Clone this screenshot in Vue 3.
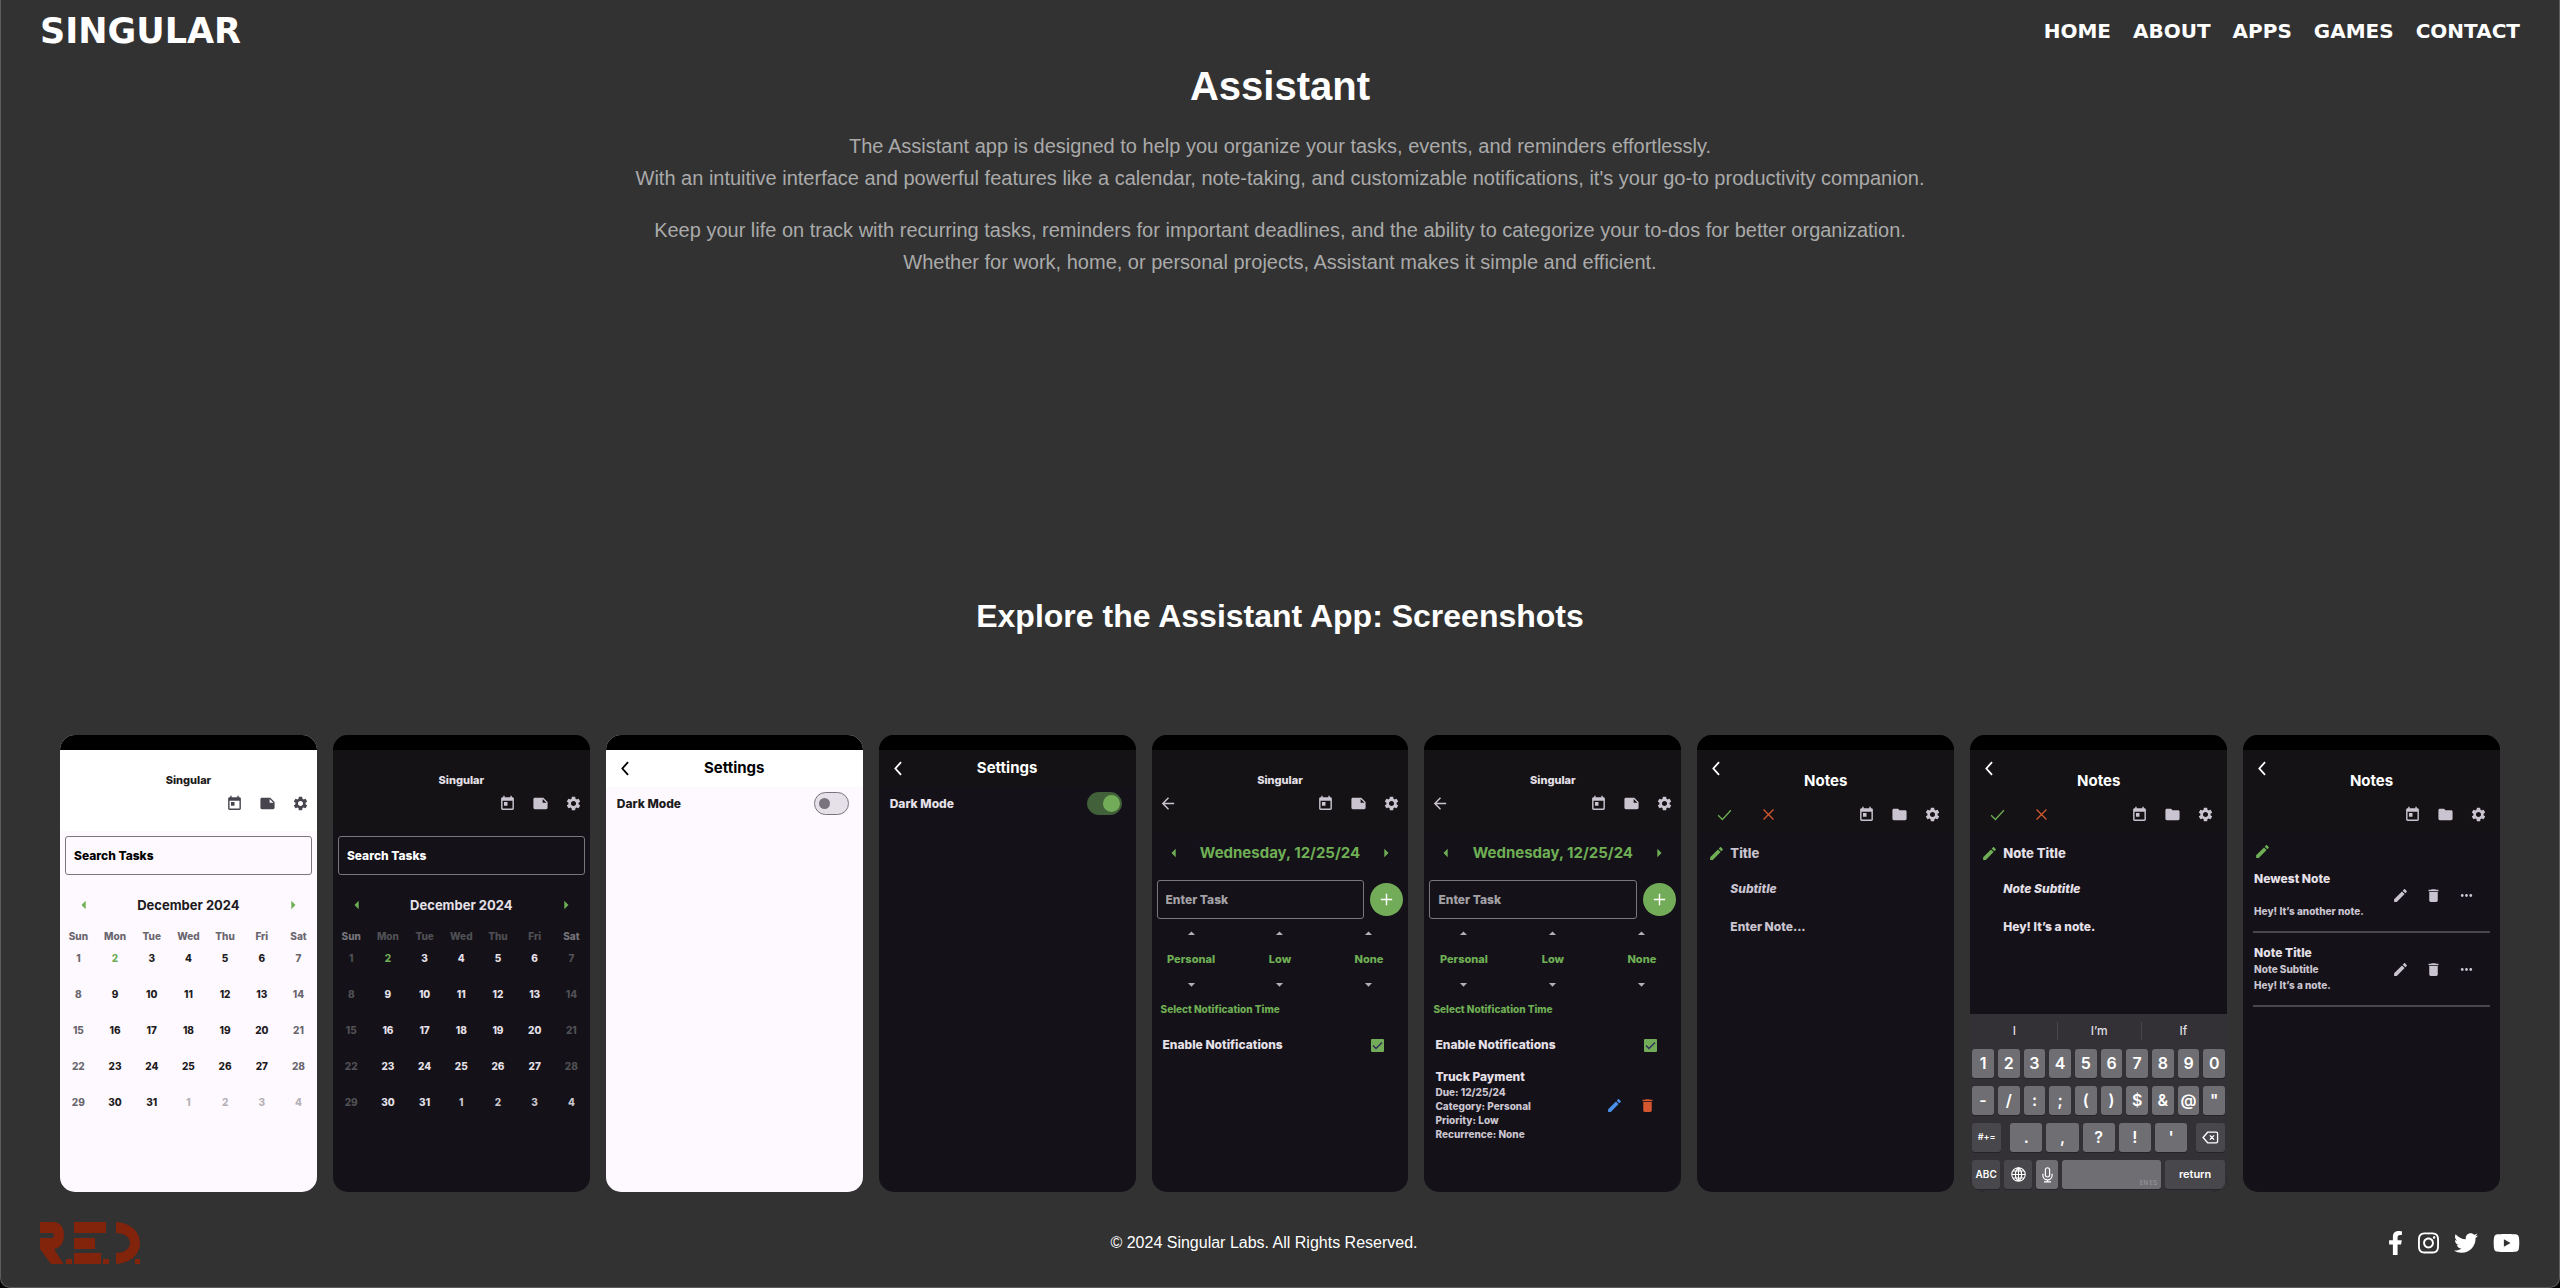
<script setup>
import { h } from 'vue'

const navLinks = ['Home', 'About', 'Apps', 'Games', 'Contact']

const icons = {
  today: { d: 'M19 3h-1V1h-2v2H8V1H6v2H5c-1.11 0-1.99.9-1.99 2L3 19c0 1.1.89 2 2 2h14c1.1 0 2-.9 2-2V5c0-1.1-.9-2-2-2zm0 16H5V8h14v11zM7 10h5v5H7z' },
  note: { d: 'M22 10l-6-6H4c-1.1 0-2 .9-2 2v12.01c0 1.1.9 1.99 2 1.99l16-.01c1.1 0 2-.89 2-1.99v-8zm-7-4.5l5.5 5.5H15V5.5z' },
  folder: { d: 'M10 4H4c-1.1 0-1.99.9-1.99 2L2 18c0 1.1.9 2 2 2h16c1.1 0 2-.9 2-2V8c0-1.1-.9-2-2-2h-8l-2-2z' },
  settings: { d: 'M19.14 12.94c.04-.3.06-.61.06-.94 0-.32-.02-.64-.07-.94l2.03-1.58c.18-.14.23-.41.12-.61l-1.92-3.32c-.12-.22-.37-.29-.59-.22l-2.39.96c-.5-.38-1.03-.7-1.62-.94l-.36-2.54c-.04-.24-.24-.41-.48-.41h-3.84c-.24 0-.43.17-.47.41l-.36 2.54c-.59.24-1.13.57-1.62.94l-2.39-.96c-.22-.08-.47 0-.59.22L2.74 8.87c-.12.21-.08.47.12.61l2.03 1.58c-.05.3-.09.63-.09.94s.02.64.07.94l-2.03 1.58c-.18.14-.23.41-.12.61l1.92 3.32c.12.22.37.29.59.22l2.39-.96c.5.38 1.03.7 1.62.94l.36 2.54c.05.24.24.41.48.41h3.84c.24 0 .44-.17.47-.41l.36-2.54c.59-.24 1.13-.56 1.62-.94l2.39.96c.22.08.47 0 .59-.22l1.92-3.32c.12-.22.07-.47-.12-.61l-2.01-1.58zM12 15.6c-1.98 0-3.6-1.62-3.6-3.6s1.62-3.6 3.6-3.6 3.6 1.62 3.6 3.6-1.62 3.6-3.6 3.6z' },
  edit: { d: 'M3 17.25V21h3.75L17.81 9.94l-3.75-3.75L3 17.25zM20.71 7.04c.39-.39.39-1.02 0-1.41l-2.34-2.34c-.39-.39-1.02-.39-1.41 0l-1.83 1.83 3.75 3.75 1.83-1.83z' },
  trash: { d: 'M6 19c0 1.1.9 2 2 2h8c1.1 0 2-.9 2-2V7H6v12zM19 4h-3.5l-1-1h-5l-1 1H5v2h14V4z' },
  more: { d: 'M6 10c-1.1 0-2 .9-2 2s.9 2 2 2 2-.9 2-2-.9-2-2-2zm12 0c-1.1 0-2 .9-2 2s.9 2 2 2 2-.9 2-2-.9-2-2-2zm-6 0c-1.1 0-2 .9-2 2s.9 2 2 2 2-.9 2-2-.9-2-2-2z' },
  left: { d: 'M14 7l-5 5 5 5V7z' },
  right: { d: 'M10 17l5-5-5-5v10z' },
  up: { d: 'M7 14l5-5 5 5z' },
  down: { d: 'M7 10l5 5 5-5z' },
  back: { d: 'M12 4l-8 8 8 8M4 12h16', line: 2 },
  chevron: { d: 'M17 3l-8 9 8 9', line: 2.6 },
  check: { d: 'M3 13l6 6L21 6', line: 1.8 },
  close: { d: 'M5 5l14 14M19 5L5 19', line: 1.8 },
  plus: { d: 'M12 4v16M4 12h16', line: 2 },
  globe: { d: 'M12 2.500a9.500 9.500 0 1 0 0 19 9.500 9.500 0 0 0 0-19zM12 2.500c-6 5-6 14 0 19M12 2.500c6 5 6 14 0 19M12 2.500v19M2.500 12h19M4.500 7h15M4.500 17h15', line: 1.5 },
  mic: { d: 'M12 2.500a3 3 0 0 0-3 3v7a3 3 0 0 0 6 0v-7a3 3 0 0 0-3-3zM5.500 11v2a6.500 6.500 0 0 0 13 0v-2M12 19.500v2.500M7 22.500h10', line: 1.7 },
  erase: { d: 'M8 4.500h12a2 2 0 0 1 2 2v11a2 2 0 0 1-2 2H8L1.500 12zM11 9l6 6M17 9l-6 6', line: 1.9 },
}

const Icon = (props) => {
  const icon = icons[props.name]
  const paint = icon.line
    ? { fill: 'none', stroke: 'currentColor', 'stroke-width': icon.line }
    : { fill: 'currentColor' }
  return h('svg', { class: 'icon', viewBox: '0 0 24 24', 'aria-hidden': 'true' }, [
    h('path', { d: icon.d, ...paint }),
  ])
}
Icon.props = ['name']

const weekdays = ['Sun', 'Mon', 'Tue', 'Wed', 'Thu', 'Fri', 'Sat']
const weeks = Array.from({ length: 5 }, (_, w) =>
  Array.from({ length: 7 }, (_, d) => {
    const n = w * 7 + d + 1
    const next = n > 31
    return { n: next ? n - 31 : n, next, weekend: !next && (d === 0 || d === 6), today: n === 2 }
  })
)

const phones = [
  { id: 'home-light', kind: 'home', light: true },
  { id: 'home-dark', kind: 'home' },
  { id: 'settings-light', kind: 'settings', light: true },
  { id: 'settings-dark', kind: 'settings' },
  { id: 'day-empty', kind: 'day' },
  { id: 'day-task', kind: 'day', task: true },
  { id: 'note-empty', kind: 'editor', title: '', subtitle: '', body: '' },
  { id: 'note-filled', kind: 'editor', title: 'Note Title', subtitle: 'Note Subtitle', body: 'Hey! It’s a note.', keyboard: true },
  { id: 'note-list', kind: 'list' },
]

const pickers = ['Personal', 'Low', 'None']
const taskLines = ['Due: 12/25/24', 'Category: Personal', 'Priority: Low', 'Recurrence: None']
const notes = [
  { title: 'Newest Note', subtitle: '', body: 'Hey! It’s another note.' },
  { title: 'Note Title', subtitle: 'Note Subtitle', body: 'Hey! It’s a note.' },
]
const digitKeys = [...'1234567890']
const symbolKeys = [...'-/:;()$&@"']
const punctuationKeys = [...".,?!'"]

const socials = [
  { name: 'Facebook', width: 320, d: 'M279.14 288l14.22-92.66h-88.91v-60.13c0-25.35 12.42-50.06 52.24-50.06h40.42V6.26S260.43 0 225.36 0c-73.22 0-121.08 44.38-121.08 124.72v70.62H22.89V288h81.39v224h100.17V288z' },
  { name: 'Instagram', width: 448, d: 'M224.1 141c-63.6 0-114.9 51.3-114.9 114.9s51.3 114.9 114.9 114.9S339 319.5 339 255.9 287.7 141 224.1 141zm0 189.6c-41.1 0-74.7-33.5-74.7-74.7s33.5-74.7 74.7-74.7 74.7 33.5 74.7 74.7-33.6 74.7-74.7 74.7zm146.4-194.3c0 14.9-12 26.8-26.8 26.8-14.9 0-26.8-12-26.8-26.8s12-26.8 26.8-26.8 26.8 12 26.8 26.8zm76.1 27.2c-1.7-35.9-9.9-67.7-36.2-93.9-26.2-26.2-58-34.4-93.9-36.2-37-2.1-147.9-2.1-184.9 0-35.8 1.7-67.6 9.9-93.9 36.1s-34.4 58-36.2 93.9c-2.1 37-2.1 147.9 0 184.9 1.7 35.9 9.9 67.7 36.2 93.9s58 34.4 93.9 36.2c37 2.1 147.9 2.1 184.9 0 35.9-1.7 67.7-9.9 93.9-36.2 26.2-26.2 34.4-58 36.2-93.9 2.1-37 2.1-147.8 0-184.8zM398.8 388c-7.8 19.6-22.9 34.7-42.6 42.6-29.5 11.7-99.5 9-132.1 9s-102.7 2.6-132.1-9c-19.6-7.8-34.7-22.9-42.6-42.6-11.7-29.5-9-99.5-9-132.1s-2.6-102.7 9-132.1c7.8-19.6 22.9-34.7 42.6-42.6 29.5-11.7 99.5-9 132.1-9s102.7-2.6 132.1 9c19.6 7.8 34.7 22.9 42.6 42.6 11.7 29.5 9 99.5 9 132.1s2.7 102.7-9 132.1z' },
  { name: 'Twitter', width: 512, d: 'M459.37 151.716c.325 4.548.325 9.097.325 13.645 0 138.72-105.583 298.558-298.558 298.558-59.452 0-114.68-17.219-161.137-47.106 8.447.974 16.568 1.299 25.34 1.299 49.055 0 94.213-16.568 130.274-44.832-46.132-.975-84.792-31.188-98.112-72.772 6.498.974 12.995 1.624 19.818 1.624 9.421 0 18.843-1.3 27.614-3.573-48.081-9.747-84.143-51.98-84.143-102.985v-1.299c13.969 7.797 30.214 12.67 47.431 13.319-28.264-18.843-46.781-51.005-46.781-87.391 0-19.492 5.197-37.36 14.294-52.954 51.655 63.675 129.3 105.258 216.365 109.807-1.624-7.797-2.599-15.918-2.599-24.04 0-57.828 46.782-104.934 104.934-104.934 30.213 0 57.502 12.67 76.67 33.137 23.715-4.548 46.456-13.32 66.599-25.34-7.798 24.366-24.366 44.833-46.132 57.827 21.117-2.273 41.584-8.122 60.426-16.243-14.292 20.791-32.161 39.308-52.628 54.253z' },
  { name: 'YouTube', width: 576, d: 'M549.655 124.083c-6.281-23.65-24.787-42.276-48.284-48.597C458.781 64 288 64 288 64S117.22 64 74.629 75.486c-23.497 6.322-42.003 24.947-48.284 48.597-11.412 42.867-11.412 132.305-11.412 132.305s0 89.438 11.412 132.305c6.281 23.65 24.787 41.5 48.284 47.821C117.22 448 288 448 288 448s170.78 0 213.371-11.486c23.497-6.321 42.003-24.171 48.284-47.821 11.412-42.867 11.412-132.305 11.412-132.305s0-89.438-11.412-132.305zm-317.51 213.508V175.185l142.739 81.205-142.739 81.201z' },
]
</script>

<template>
  <div class="page">
    <header class="site-header">
      <a class="brand" href="#">SINGULAR</a>
      <nav class="site-nav">
        <a v-for="link in navLinks" :key="link" href="#">{{ link }}</a>
      </nav>
    </header>

    <main>
      <section class="intro">
        <h1>Assistant</h1>
        <p>
          The Assistant app is designed to help you organize your tasks, events, and reminders effortlessly.<br />
          With an intuitive interface and powerful features like a calendar, note-taking, and customizable notifications, it's your go-to productivity companion.
        </p>
        <p>
          Keep your life on track with recurring tasks, reminders for important deadlines, and the ability to categorize your to-dos for better organization.<br />
          Whether for work, home, or personal projects, Assistant makes it simple and efficient.
        </p>
      </section>

      <section class="showcase">
        <h2>Explore the Assistant App: Screenshots</h2>
        <div class="phones">
          <article v-for="phone in phones" :key="phone.id" class="phone" :class="{ light: phone.light }">
            <div class="status"></div>

            <template v-if="phone.kind === 'home' || phone.kind === 'day'">
              <div class="bar home-bar">
                <div class="app-name">Singular</div>
                <div class="tools">
                  <button v-if="phone.kind === 'day'" type="button" aria-label="Back"><Icon name="back" /></button>
                  <div class="tool-group">
                    <button type="button" aria-label="Today"><Icon name="today" /></button>
                    <button type="button" aria-label="Notes"><Icon name="note" /></button>
                    <button type="button" aria-label="Settings"><Icon name="settings" /></button>
                  </div>
                </div>
              </div>
            </template>

            <div v-else class="bar title-bar" :class="{ short: phone.kind === 'settings' }">
              <div class="title-row">
                <button type="button" aria-label="Back"><Icon name="chevron" /></button>
                <h3>{{ phone.kind === 'settings' ? 'Settings' : 'Notes' }}</h3>
              </div>
              <div v-if="phone.kind !== 'settings'" class="tools">
                <div v-if="phone.kind === 'editor'" class="tool-group confirm">
                  <button type="button" class="green" aria-label="Save"><Icon name="check" /></button>
                  <button type="button" class="red" aria-label="Discard"><Icon name="close" /></button>
                </div>
                <div class="tool-group">
                  <button type="button" aria-label="Today"><Icon name="today" /></button>
                  <button type="button" aria-label="Folders"><Icon name="folder" /></button>
                  <button type="button" aria-label="Settings"><Icon name="settings" /></button>
                </div>
              </div>
            </div>

            <div v-if="phone.kind === 'home'" class="home">
              <input class="field" type="text" placeholder="Search Tasks" aria-label="Search Tasks" />
              <div class="stepper">
                <button type="button" aria-label="Previous month"><Icon name="left" /></button>
                <span class="month">December 2024</span>
                <button type="button" aria-label="Next month"><Icon name="right" /></button>
              </div>
              <table class="calendar">
                <thead>
                  <tr><th v-for="day in weekdays" :key="day" scope="col">{{ day }}</th></tr>
                </thead>
                <tbody>
                  <tr v-for="(week, w) in weeks" :key="w">
                    <td v-for="day in week" :key="day.n" :class="{ next: day.next, weekend: day.weekend, today: day.today }">{{ day.n }}</td>
                  </tr>
                </tbody>
              </table>
            </div>

            <label v-else-if="phone.kind === 'settings'" class="setting">
              <span>Dark Mode</span>
              <input class="switch" type="checkbox" :checked="!phone.light" />
            </label>

            <div v-else-if="phone.kind === 'day'" class="day">
              <div class="stepper">
                <button type="button" aria-label="Previous day"><Icon name="left" /></button>
                <span class="date">Wednesday, 12/25/24</span>
                <button type="button" aria-label="Next day"><Icon name="right" /></button>
              </div>
              <div class="add-task">
                <input class="field" type="text" placeholder="Enter Task" aria-label="Enter Task" />
                <button type="button" class="add" aria-label="Add task"><Icon name="plus" /></button>
              </div>
              <div class="pickers">
                <div v-for="value in pickers" :key="value" class="picker">
                  <button type="button" :aria-label="'Previous, ' + value"><Icon name="up" /></button>
                  <span>{{ value }}</span>
                  <button type="button" :aria-label="'Next, ' + value"><Icon name="down" /></button>
                </div>
              </div>
              <button type="button" class="time">Select Notification Time</button>
              <label class="enable">
                <span>Enable Notifications</span>
                <input class="tick" type="checkbox" checked />
              </label>
              <div v-if="phone.task" class="task">
                <div class="task-text">
                  <h4>Truck Payment</h4>
                  <p v-for="line in taskLines" :key="line">{{ line }}</p>
                </div>
                <div class="tool-group">
                  <button type="button" class="blue" aria-label="Edit task"><Icon name="edit" /></button>
                  <button type="button" class="red" aria-label="Delete task"><Icon name="trash" /></button>
                </div>
              </div>
            </div>

            <template v-else-if="phone.kind === 'editor'">
              <div class="editor">
                <Icon class="green" name="edit" />
                <input class="note-title" type="text" placeholder="Title" aria-label="Title" :value="phone.title" />
                <input class="note-subtitle" type="text" placeholder="Subtitle" aria-label="Subtitle" :value="phone.subtitle" />
                <input class="note-body" type="text" placeholder="Enter Note..." aria-label="Note" :value="phone.body" />
              </div>
              <div v-if="phone.keyboard" class="keyboard">
                <div class="suggestions"><span>I</span><span>I’m</span><span>If</span></div>
                <div class="keys">
                  <button v-for="k in digitKeys" :key="k" type="button" class="key">{{ k }}</button>
                </div>
                <div class="keys">
                  <button v-for="k in symbolKeys" :key="k" type="button" class="key">{{ k }}</button>
                </div>
                <div class="keys punctuation">
                  <button type="button" class="key dark tiny">#+=</button>
                  <div class="keys">
                    <button v-for="k in punctuationKeys" :key="k" type="button" class="key">{{ k }}</button>
                  </div>
                  <button type="button" class="key dark" aria-label="Delete"><Icon name="erase" /></button>
                </div>
                <div class="keys bottom-keys">
                  <button type="button" class="key dark small">ABC</button>
                  <button type="button" class="key dark" aria-label="Language"><Icon name="globe" /></button>
                  <button type="button" class="key" aria-label="Dictate"><Icon name="mic" /></button>
                  <button type="button" class="key space">EN ES</button>
                  <button type="button" class="key dark return">return</button>
                </div>
              </div>
            </template>

            <div v-else class="list">
              <button type="button" class="green new-note" aria-label="New note"><Icon name="edit" /></button>
              <div v-for="note in notes" :key="note.title" class="note">
                <div class="note-text">
                  <h4>{{ note.title }}</h4>
                  <p>{{ note.subtitle }}</p>
                  <p>{{ note.body }}</p>
                </div>
                <div class="tool-group">
                  <button type="button" aria-label="Edit note"><Icon name="edit" /></button>
                  <button type="button" aria-label="Delete note"><Icon name="trash" /></button>
                  <button type="button" aria-label="More"><Icon name="more" /></button>
                </div>
              </div>
            </div>
          </article>
        </div>
      </section>
    </main>

    <footer class="site-footer">
      <svg class="mark" viewBox="0 0 100 42" role="img" aria-label="R.E.D.">
        <path d="M0 0H13C20 0 24 5 24 13C24 21 20 26 14 27L23.500 42H11L0 27V16H12Q14 16 14 13.500Q14 11 12 11H0Z" />
        <rect x="26" y="37" width="6" height="5" />
        <rect x="34" y="0" width="32" height="11" />
        <rect x="34" y="16" width="21" height="11" />
        <rect x="34" y="31" width="27" height="11" />
        <rect x="63" y="37" width="6" height="5" />
        <path d="M76 0C91 1 100 10 100 21S91 41 76 42V31C84 31 90 27 90 21S84 11 76 11Z" />
        <rect x="95" y="37" width="5" height="5" />
      </svg>
      <p>© 2024 Singular Labs. All Rights Reserved.</p>
      <div class="socials">
        <a v-for="s in socials" :key="s.name" href="#" :aria-label="s.name">
          <svg :viewBox="`0 0 ${s.width} 512`" aria-hidden="true"><path :d="s.d" /></svg>
        </a>
      </div>
    </footer>
  </div>
</template>

<style>
body {
  margin: 0;
  background: #000;
}
</style>

<style scoped>
* {
  box-sizing: border-box;
}

.page {
  display: flex;
  flex-direction: column;
  min-height: 100vh;
  border: 1px solid #5c5c5c;
  border-top: 0;
  border-radius: 0 0 10px 10px;
  background: #323232;
  color: #fff;
  font-family: "Liberation Sans", Arial, sans-serif;
}

h1, h2, h3, h4, p {
  margin: 0;
}

a {
  color: inherit;
  text-decoration: none;
}

button, input {
  margin: 0;
  padding: 0;
  border: 0;
  background: none;
  color: inherit;
  font: inherit;
}

button {
  display: flex;
  align-items: center;
  justify-content: center;
}

input[type="text"] {
  min-width: 0;
  width: 100%;
}

.icon {
  display: block;
  width: 17px;
  height: 17px;
}

/* Header */
.site-header {
  display: flex;
  align-items: center;
  justify-content: space-between;
  height: 62px;
  padding: 0 39px;
  font-family: "DejaVu Sans", Verdana, sans-serif;
  font-weight: 700;
}

.brand {
  font-size: 35px;
}

.site-nav {
  display: flex;
  gap: 22px;
  font-size: 20px;
  text-transform: uppercase;
}

/* Intro */
.intro {
  display: flex;
  flex-direction: column;
  gap: 20px;
  text-align: center;
}

.intro h1 {
  font-size: 40px;
  line-height: 48px;
}

.intro p {
  color: #aaa;
  font-size: 20px;
  line-height: 32px;
}

.showcase {
  padding: 320px 59px 0;
}

.showcase h2 {
  margin-bottom: 101px;
  font-size: 32px;
  line-height: 36px;
  text-align: center;
}

.phones {
  display: grid;
  grid-template-columns: repeat(9, minmax(0, 1fr));
  gap: 16px;
}

/* Phone frame */
.phone {
  --ink: #e6e0e9;
  --strong: #fff;
  --tool: #cac4d0;
  --weekend: #505055;
  --weekday: #505055;
  --next: #cac7cd;
  --border: #79767d;
  --hint: #a3a1a6;
  display: flex;
  flex-direction: column;
  aspect-ratio: 9 / 16;
  overflow: hidden;
  border-radius: 15px;
  background: #141218;
  color: var(--ink);
  font-family: Inter, "Noto Sans", sans-serif;
  font-size: 12px;
  font-weight: 800;
  line-height: 16px;
}

.phone.light {
  --ink: #1d1b20;
  --strong: #000;
  --tool: #49454f;
  --weekend: #6a666e;
  --weekday: #6a666e;
  --next: #b4b0b7;
  background: #fef9ff;
}

.status {
  height: 15px;
  background: #000;
}

.bar {
  height: 81px;
  background: #141214;
}

.light .bar {
  background: #fff;
}

.home-bar {
  padding-top: 22px;
}

.app-name {
  margin-bottom: 7px;
  font-size: 11px;
  text-align: center;
}

.tools {
  display: flex;
  padding: 0 8px;
  color: var(--tool);
}

.tool-group {
  display: flex;
  gap: 16px;
  margin-left: auto;
  color: var(--tool);
}

.confirm {
  gap: 27px;
  margin-left: 0;
}

.green {
  color: #6fae55;
}

.red {
  color: #d5572f;
}

.blue {
  color: #4a8fe8;
}

.title-bar {
  padding-top: 10px;
  color: var(--strong);
}

.title-row {
  display: grid;
  grid-template-columns: 17px 1fr 17px;
  height: 46px;
  padding: 0 10px;
}

.title-row button {
  align-self: start;
}

.title-row h3 {
  margin-top: 13px;
  font-size: 15px;
  font-weight: 700;
  text-align: center;
}

.short {
  height: 37px;
}

.title-bar.short h3 {
  margin-top: 0;
}

.title-bar .tools {
  padding: 0 13px 0 19px;
}

.field {
  height: 39px;
  padding: 0 8px;
  border: 1px solid var(--border);
  border-radius: 3px;
}

.field::placeholder {
  color: var(--strong);
  opacity: 1;
}

.stepper {
  display: flex;
  align-items: center;
  justify-content: space-between;
  height: 20px;
}

.stepper .icon {
  width: 20px;
  height: 20px;
  color: #6fae55;
}

/* Calendar screen */
.home {
  padding-top: 5px;
}

.home .field {
  display: block;
  width: calc(100% - 10px);
  margin: 0 5px 20px;
}

.home .stepper {
  padding: 0 14px;
}

.month {
  font-size: 13px;
  font-weight: 700;
}

.calendar {
  width: 100%;
  margin-top: 14px;
  border-collapse: collapse;
  table-layout: fixed;
  font-size: 10px;
  line-height: 14px;
  text-align: center;
}

.calendar th {
  padding: 0 0 8px;
  color: var(--weekday);
  font-weight: 800;
}

.calendar th:first-child,
.calendar th:last-child {
  color: #77757b;
}

.light .calendar th {
  color: var(--weekday);
}

.calendar td {
  padding: 0 0 22px;
}

.calendar .weekend {
  color: var(--weekend);
}

.calendar .next {
  color: var(--next);
}

.calendar .today {
  color: #6fae55;
}

/* Settings screen */
.setting {
  display: flex;
  align-items: center;
  justify-content: space-between;
  height: 33px;
  padding: 0 14px 0 11px;
}

.switch {
  display: flex;
  align-items: center;
  width: 35px;
  height: 23px;
  padding: 0 4px;
  border: 1px solid #79747e;
  border-radius: 12px;
  background: #e6e0e9;
  appearance: none;
}

.switch::before {
  content: "";
  width: 11px;
  height: 11px;
  border-radius: 50%;
  background: #79747e;
}

.switch:checked {
  justify-content: flex-end;
  padding: 0 1px;
  border-color: #42613a;
  background: #42613a;
}

.switch:checked::before {
  width: 17px;
  height: 17px;
  background: #73ac58;
}

/* Day screen */
.day .stepper {
  height: 44px;
  padding: 0 12px;
}

.date {
  color: #6fae55;
  font-size: 15px;
  font-weight: 700;
}

.add-task {
  display: flex;
  align-items: center;
  gap: 6px;
  margin-top: 5px;
  padding: 0 5px;
}

.day .field::placeholder {
  color: var(--hint);
}

.add {
  flex: none;
  width: 33px;
  height: 33px;
  border-radius: 50%;
  background: #73ac58;
  color: #fff;
}

.pickers {
  display: grid;
  grid-template-columns: 79px 1fr 79px;
  padding-top: 6px;
}

.picker {
  display: flex;
  flex-direction: column;
  align-items: center;
  gap: 9px;
  color: #6fae55;
  font-size: 11px;
}

.picker button {
  color: #b4b0b8;
}

.time {
  margin: 8px 9px 20px;
  color: #6fae55;
  font-size: 10px;
}

.enable {
  display: flex;
  align-items: center;
  justify-content: space-between;
  padding: 0 24px 0 11px;
}

.tick {
  width: 13px;
  height: 13px;
  border-radius: 1px;
  background: #73ac58 url("data:image/svg+xml,%3Csvg xmlns='http://www.w3.org/2000/svg' viewBox='0 0 13 13'%3E%3Cpath d='M2 6.500l3 3 6-6' fill='none' stroke='%23302b5e' stroke-width='1.400'/%3E%3C/svg%3E");
  appearance: none;
}

.task {
  display: flex;
  align-items: center;
  margin-top: 16px;
  padding: 0 25px 0 11px;
}

.task h4,
.note h4 {
  font-size: 12px;
  font-weight: 800;
}

.task p {
  color: #cac4d0;
  font-size: 10px;
  line-height: 14px;
}

/* Note editor */
.editor {
  display: grid;
  grid-template-columns: 17px 1fr;
  column-gap: 5px;
  padding: 12px 11px 0;
  align-items: center;
}

.editor input {
  grid-column: 2;
  height: 16px;
}

.editor input::placeholder {
  color: #cac4d0;
  opacity: 1;
}

.editor .note-title {
  height: 20px;
  font-size: 13px;
}

.note-subtitle {
  margin: 18px 0 22px;
  font-style: italic;
}

/* Keyboard */
.keyboard {
  display: flex;
  flex-direction: column;
  gap: 8px;
  margin-top: auto;
  padding: 0 2px 3px;
  background: #333136;
  color: #fff;
  font-weight: 500;
}

.suggestions {
  display: grid;
  grid-template-columns: repeat(3, 1fr);
  height: 18px;
  margin: 8px 0 1px;
  line-height: 18px;
  text-align: center;
  color: #dddce0;
}

.suggestions span + span {
  border-left: 1px solid #47454a;
}

.keys {
  display: grid;
  grid-auto-columns: minmax(0, 1fr);
  grid-auto-flow: column;
  gap: 4px;
}

.punctuation {
  grid-template-columns: 29px minmax(0, 1fr) 29px;
  gap: 9px;
}

.bottom-keys {
  grid-template-columns: 28px 28px 22px minmax(0, 1fr) 60px;
}

.key {
  height: 29px;
  border-radius: 3px;
  background: #6f6e72;
  box-shadow: 0 1px 0 #252429;
  font-size: 16px;
  font-weight: 600;
}

.dark {
  background: #48474c;
}

.tiny {
  font-size: 9px;
}

.small {
  font-size: 10px;
}

.return {
  font-size: 11px;
}

.space {
  align-items: flex-end;
  justify-content: flex-end;
  padding: 0 4px;
  color: #98979b;
  font-size: 6px;
  font-weight: 500;
  line-height: 12px;
}

/* Note list */
.new-note {
  height: 16px;
  margin: 12px 0 0 11px;
}

.note {
  display: flex;
  align-items: center;
  height: 74px;
  margin: 0 10px;
  padding: 0 15px 0 1px;
  border-bottom: 2px solid #49474d;
}

.note p {
  min-height: 16px;
  color: #cac4d0;
  font-size: 10px;
}

/* Footer */
.site-footer {
  display: flex;
  align-items: center;
  justify-content: space-between;
  margin-top: auto;
  padding: 30px 39px 23px;
  font-size: 16px;
}

.mark {
  width: 100px;
  height: 42px;
  fill: #82230c;
}

.socials {
  display: flex;
  gap: 15px;
}

.socials svg {
  display: block;
  height: 24px;
  fill: #fff;
}
</style>
